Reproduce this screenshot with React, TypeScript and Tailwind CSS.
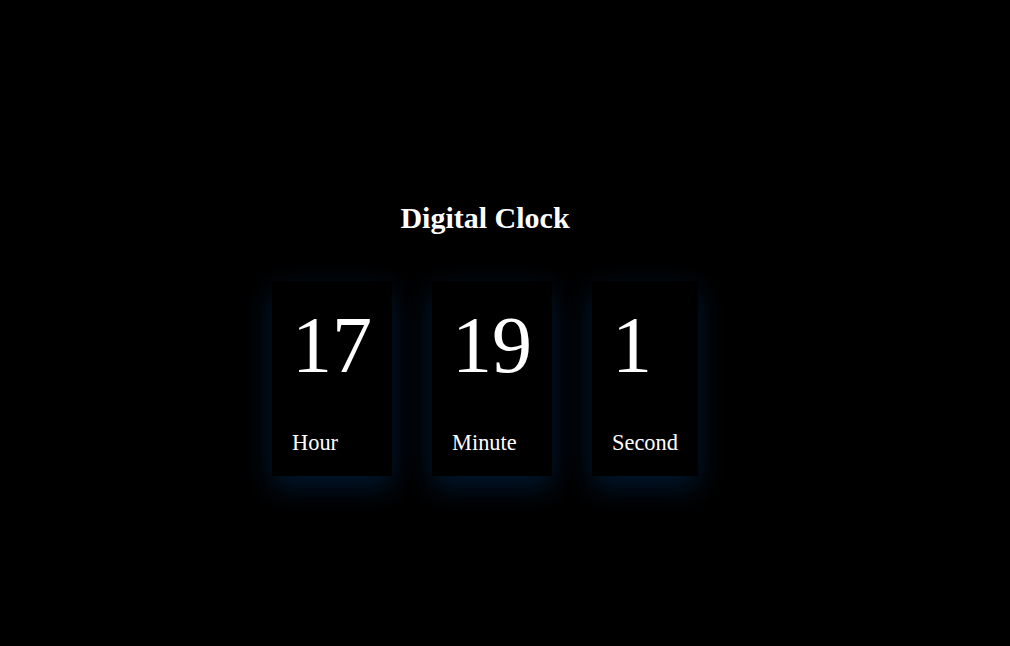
import React from "react";

const serif = { fontFamily: '"Liberation Serif", "Times New Roman", serif' };

function Unit({ value, label }: { value: string; label: string }) {
  return (
    <div className="flex flex-col bg-black p-5 shadow-[0_10px_28px_rgba(0,90,180,0.28)]">
      <span className="text-[80px] leading-[88px] text-white">{value}</span>
      <span className="mt-[41px] text-[22.4px] leading-[26px] text-white">{label}</span>
    </div>
  );
}

export default function App() {
  return (
    <div className="min-h-[646px] w-full bg-black" style={serif}>
      <div className="flex flex-col items-center pr-[40px] pt-[201px]">
        <h1 className="text-[30px] font-bold leading-[34px] text-white">Digital Clock</h1>
        <div className="mt-[46px] flex gap-10">
          <Unit value="17" label="Hour" />
          <Unit value="19" label="Minute" />
          <Unit value="1" label="Second" />
        </div>
      </div>
    </div>
  );
}
